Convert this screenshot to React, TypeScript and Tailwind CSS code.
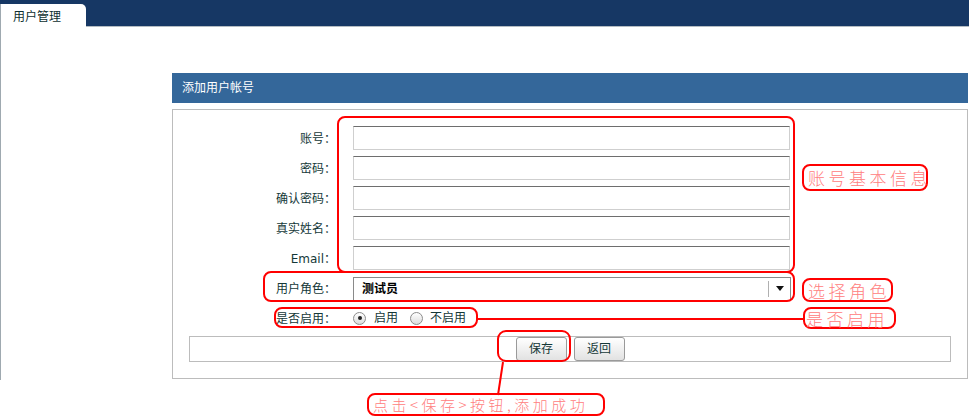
import React from "react";

const labelFont = "[font-family:'DejaVu_Sans','Noto_Sans_CJK_SC',sans-serif]";
const cjkFont = "[font-family:'Noto_Sans_CJK_SC',sans-serif]";

const fields = ["账号", "密码", "确认密码", "真实姓名", "Email"];

function Label({ text }: { text: string }) {
  return (
    <div className="w-[163px] text-right text-[12px] leading-[14px] text-[#143838]">
      {text}
      <span className={cjkFont}>：</span>
    </div>
  );
}

function Radio({ checked }: { checked?: boolean }) {
  return (
    <span className="w-[13px] h-[13px] rounded-full border border-[#8c8c8c] bg-gradient-to-b from-white to-[#dcdcdc] flex items-center justify-center">
      {checked && <span className="w-[4px] h-[4px] rounded-full bg-[#222]" />}
    </span>
  );
}

function Button({ text }: { text: string }) {
  return (
    <button className="w-[51px] h-[24px] rounded-[3px] border border-[#9a9a9a] bg-gradient-to-b from-white to-[#e2e2e2] text-[12px] text-[#143838]">
      {text}
    </button>
  );
}

function Note({
  className,
  text,
  textClass = "text-[17px] tracking-[3.5px] pl-[4px]",
}: {
  className: string;
  text?: string;
  textClass?: string;
}) {
  return (
    <div
      className={`absolute border-2 border-[#ff0000] rounded-[8px] flex items-center ${className}`}
    >
      {text && (
        <span
          className={`${cjkFont} font-light text-[#ff8080] leading-none whitespace-nowrap ${textClass}`}
        >
          {text}
        </span>
      )}
    </div>
  );
}

export default function App() {
  return (
    <div className={`relative w-[969px] h-[419px] bg-white overflow-hidden ${labelFont}`}>
      {/* top bar */}
      <div className="flex h-[27px] bg-[#163764]">
        <div className="mt-[4px] w-[86px] bg-white rounded-tr-[5px] border-l border-[#9fa9b0] pl-[12px] pt-[6px] text-[12px] leading-[14px] text-[#0e3030]">
          用户管理
        </div>
        <div className="flex-1 self-end h-[1px] bg-[#b4bcc2]" />
      </div>

      {/* body */}
      <div className="h-[353px] border-l border-[#9fa9b0] pt-[46px] pl-[171px]">
        <div className="w-[796px]">
          <div className="h-[30px] bg-[#34679a] pl-[10px] flex items-center text-[12px] text-white">
            添加用户帐号
          </div>
          <div className="mt-[6px] h-[270px] border border-[#bcbcbc] pt-[13px]">
            {fields.map((f) => (
              <div key={f} className="flex items-center h-[30px]">
                <Label text={f} />
                <div className="ml-[17px] w-[437px] h-[24px] border border-[#cfcfcf] border-t-[#6e6e6e] bg-white" />
              </div>
            ))}
            <div className="flex items-center h-[31px]">
              <Label text="用户角色" />
              <div className="ml-[17px] w-[438px] h-[24px] border border-[#8a8a8a] border-b-[#5a5a5a] flex items-center">
                <span className="pl-[8px] flex-1 text-[12px] font-bold text-black">测试员</span>
                <span className="w-px h-[16px] bg-[#b0b0b0]" />
                <span className="w-[21px] flex justify-center">
                  <svg width="8" height="5" viewBox="0 0 8 5">
                    <path d="M0 0h8L4 5z" fill="#111" />
                  </svg>
                </span>
              </div>
            </div>
            <div className="flex items-center h-[28px]">
              <Label text="是否启用" />
              <div className="ml-[17px] flex items-center text-[12px] text-[#143838]">
                <Radio checked />
                <span className="ml-[8px]">启用</span>
                <span className="ml-[12px]">
                  <Radio />
                </span>
                <span className="ml-[7px]">不启用</span>
              </div>
            </div>
            <div className="mt-[4px] ml-[16px] w-[762px] h-[26px] border border-[#bcbcbc] flex items-center justify-center gap-[7px]">
              <Button text="保存" />
              <Button text="返回" />
            </div>
          </div>
        </div>
      </div>

      {/* annotations */}
      <Note className="left-[337px] top-[116px] w-[458px] h-[157px]" />
      <Note className="left-[802px] top-[164px] w-[126px] h-[27px]" text="账号基本信息" />
      <Note className="left-[263px] top-[271px] w-[532px] h-[31px]" />
      <Note className="left-[802px] top-[278px] w-[91px] h-[24px]" text="选择角色" />
      <Note className="left-[274px] top-[307px] w-[204px] h-[21px]" />
      <div className="absolute left-[478px] top-[318px] w-[326px] h-[2px] bg-[#ff0000]" />
      <Note
        className="left-[803px] top-[307px] w-[93px] h-[22px]"
        text="是否启用"
        textClass="text-[17px] tracking-[3.5px] pl-[1px]"
      />
      <Note className="left-[497px] top-[330px] w-[74px] h-[32px] rounded-[9px]" />
      <svg className="absolute left-0 top-0" width="969" height="419">
        <line x1="503" y1="362" x2="498" y2="395" stroke="#ff0000" strokeWidth="2" />
      </svg>
      <Note
        className="left-[367px] top-[393px] w-[238px] h-[23px]"
        text="点击<保存>按钮,添加成功"
        textClass="text-[15px] tracking-[3.5px] pl-[4px]"
      />
    </div>
  );
}
